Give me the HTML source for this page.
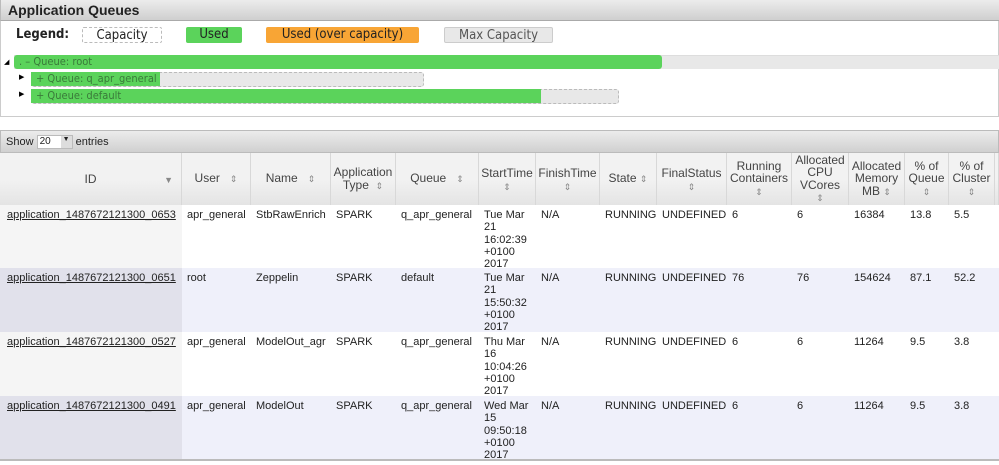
<!DOCTYPE html><html><head><style>
*{margin:0;padding:0;box-sizing:border-box}
body{width:999px;height:461px;overflow:hidden;background:#fff;font-family:"Liberation Sans",Arial,sans-serif;font-size:11px;color:#222;position:relative}
.a{position:absolute}
.title{left:0;top:0;width:999px;height:21px;background:linear-gradient(#ececec,#cfcfcf);border-bottom:1px solid #aaa;font-weight:bold;font-size:14px;padding:2px 7px;color:#222;border-left:1px solid #bbb}
.panel{left:0;top:21px;width:999px;height:96px;border:1px solid #ccc;border-top:none}
.lg{top:27px;height:16px;font-size:13px;text-align:center;line-height:15px;font-family:"DejaVu Sans Condensed","DejaVu Sans",sans-serif;border-radius:2px}
.q{font-size:11px;line-height:13px;color:#3a7a3a;font-family:"DejaVu Sans Condensed","DejaVu Sans",sans-serif;padding-left:5px;white-space:nowrap}
.tri{font-size:7px;color:#000}
.tb{left:0;top:130px;width:999px;height:23px;background:linear-gradient(#ececec,#d0d0d0);border:1px solid #bbb;font-size:11px;padding:4px 5px}
.th{top:153px;height:52px;background:linear-gradient(#f2f2f2 0,#f2f2f2 50%,#e4e4e4 100%);border-right:1px solid #d8d8d8;color:#444;text-align:center;font-size:12px;line-height:12.5px;display:flex;align-items:center;justify-content:center}
.th.t{align-items:flex-start;padding-top:14px}
.s{color:#888;font-size:9px}
.td{font-size:11px;line-height:12.3px;padding:4px 5px;color:#222}
a{color:#222}
</style></head><body>
<div class="a title">Application Queues</div>
<div class="a panel"></div>
<div class="a" style="left:16px;top:27px;font-weight:bold;font-size:13px;font-family:'DejaVu Sans Condensed','DejaVu Sans',sans-serif">Legend:</div>
<div class="a lg" style="left:82px;width:80px;border:1px dashed #bbb">Capacity</div>
<div class="a lg" style="left:186px;width:56px;background:#5bd35b">Used</div>
<div class="a lg" style="left:266px;width:153px;background:#f8a535">Used (over capacity)</div>
<div class="a lg" style="left:444px;width:109px;background:#e8e8e8;border:1px solid #ccc;color:#555">Max Capacity</div>
<div class="a tri" style="left:4px;top:58px">◢</div>
<div class="a" style="left:14px;top:55px;width:985px;height:14px;background:#e8e8e8;border-top:1px solid #ddd"></div>
<div class="a q" style="left:14px;top:55px;width:648px;height:14px;background:#5bd35b;border-radius:3px">. – Queue: root</div>
<div class="a tri" style="left:19px;top:73px">▶</div>
<div class="a" style="left:31px;top:72px;width:393px;height:15px;background:#e8e8e8;border:1px dashed #bbb;border-radius:3px"></div>
<div class="a q" style="left:31px;top:72px;width:129px;height:14px;background:#5bd35b">+ Queue: q_apr_general</div>
<div class="a tri" style="left:19px;top:90px">▶</div>
<div class="a" style="left:31px;top:89px;width:588px;height:15px;background:#e8e8e8;border:1px dashed #bbb;border-radius:3px"></div>
<div class="a q" style="left:31px;top:89px;width:510px;height:14px;background:#5bd35b">+ Queue: default</div>

<div class="a tb">Show <span style="display:inline-block;background:#fff;width:36px;height:14px;border:1px solid #bbb;vertical-align:middle;font-size:10px;padding-left:2px;position:relative">20<span style="position:absolute;right:0;top:0;width:11px;height:12px;background:#ddd;font-size:7px;text-align:center">▼</span></span> entries</div>

<div class="a th" style="left:0;width:182px"><div>ID</div><span class="s" style="position:absolute;right:8px;top:21px">▼</span></div>
<div class="a th" style="left:182px;width:69px"><div>User &nbsp;&nbsp;<span class="s">⇕</span></div></div>
<div class="a th" style="left:251px;width:80px"><div>Name &nbsp;&nbsp;<span class="s">⇕</span></div></div>
<div class="a th" style="left:331px;width:65px"><div>Application<br>Type &nbsp;<span class="s">⇕</span></div></div>
<div class="a th" style="left:396px;width:83px"><div>Queue &nbsp;&nbsp;<span class="s">⇕</span></div></div>
<div class="a th t" style="left:479px;width:57px"><div>StartTime<br><span class="s">⇕</span></div></div>
<div class="a th t" style="left:536px;width:64px"><div>FinishTime<br><span class="s">⇕</span></div></div>
<div class="a th" style="left:600px;width:57px"><div>State <span class="s">⇕</span></div></div>
<div class="a th t" style="left:657px;width:70px"><div>FinalStatus<br><span class="s">⇕</span></div></div>
<div class="a th" style="left:727px;width:65px"><div>Running<br>Containers<br><span class="s">⇕</span></div></div>
<div class="a th" style="left:792px;width:57px"><div>Allocated<br>CPU<br>VCores<br><span class="s">⇕</span></div></div>
<div class="a th" style="left:849px;width:56px"><div>Allocated<br>Memory<br>MB <span class="s">⇕</span></div></div>
<div class="a th" style="left:905px;width:44px"><div>% of<br>Queue<br><span class="s">⇕</span></div></div>
<div class="a th" style="left:949px;width:46px"><div>% of<br>Cluster<br><span class="s">⇕</span></div></div>
<div class="a th" style="left:995px;width:4px"></div>

<div class="a" style="left:0;top:205px;width:999px;height:63px;background:#fff"></div>
<div class="a" style="left:0;top:205px;width:182px;height:63px;background:#f5f5f5"></div>
<div class="a" style="left:0;top:268px;width:999px;height:64px;background:#eff0fa"></div>
<div class="a" style="left:0;top:268px;width:182px;height:64px;background:#e1e1eb"></div>
<div class="a" style="left:0;top:332px;width:999px;height:64px;background:#fff"></div>
<div class="a" style="left:0;top:332px;width:182px;height:64px;background:#f5f5f5"></div>
<div class="a" style="left:0;top:396px;width:999px;height:63px;background:#eff0fa"></div>
<div class="a" style="left:0;top:396px;width:182px;height:63px;background:#e1e1eb"></div>
<div class="a" style="left:0;top:459px;width:999px;height:2px;background:#bbb"></div>

<div id="rows"></div>
<script>
var cols=[2,182,251,331,396,479,536,600,657,727,792,849,905,949];
var data=[
["application_1487672121300_0653","apr_general","StbRawEnrich","SPARK","q_apr_general","Tue Mar<br>21<br>16:02:39<br>+0100<br>2017","N/A","RUNNING","UNDEFINED","6","6","16384","13.8","5.5"],
["application_1487672121300_0651","root","Zeppelin","SPARK","default","Tue Mar<br>21<br>15:50:32<br>+0100<br>2017","N/A","RUNNING","UNDEFINED","76","76","154624","87.1","52.2"],
["application_1487672121300_0527","apr_general","ModelOut_agr","SPARK","q_apr_general","Thu Mar<br>16<br>10:04:26<br>+0100<br>2017","N/A","RUNNING","UNDEFINED","6","6","11264","9.5","3.8"],
["application_1487672121300_0491","apr_general","ModelOut","SPARK","q_apr_general","Wed Mar<br>15<br>09:50:18<br>+0100<br>2017","N/A","RUNNING","UNDEFINED","6","6","11264","9.5","3.8"]];
var tops=[205,268,332,396],h="";
data.forEach(function(r,i){r.forEach(function(c,j){h+='<div class="a td" style="left:'+cols[j]+'px;top:'+tops[i]+'px">'+(j==0?'<a href="#">'+c+'</a>':c)+'</div>';});});
document.getElementById('rows').innerHTML=h;
</script>
</body></html>
